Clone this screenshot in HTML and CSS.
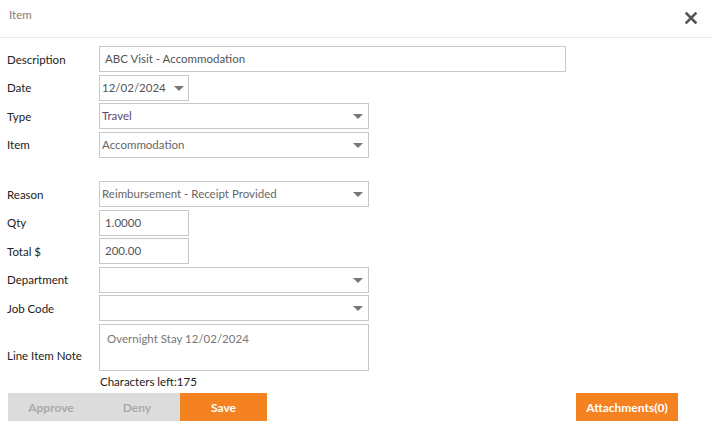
FILE: index.html
```html
<!DOCTYPE html>
<html lang="en">
<head>
    <meta charset="UTF-8">
    <title>Item</title>
    <link rel="stylesheet" href="styles.css">
</head>
<body>

    <!-- Cabecera del diálogo -->
    <div class="dialog-header">
        <span class="dialog-title">Item</span>
        <span class="close">
            <svg width="12" height="12" viewBox="0 0 12 12">
                <path d="M1.5 1.5 L10.5 10.5 M10.5 1.5 L1.5 10.5" stroke="#555" stroke-width="2.6" stroke-linecap="square"/>
            </svg>
        </span>
    </div>

    <!-- Formulario -->
    <div class="form">
        <div class="row">
            <label>Description</label>
            <div class="field wide">ABC Visit - Accommodation</div>
        </div>
        <div class="row">
            <label>Date</label>
            <div class="field small select date">12/02/2024</div>
        </div>
        <div class="row">
            <label>Type</label>
            <div class="field medium select type">Travel</div>
        </div>
        <div class="row">
            <label>Item</label>
            <div class="field medium select plain">Accommodation</div>
        </div>

        <div class="spacer"></div>

        <div class="row">
            <label>Reason</label>
            <div class="field medium select plain">Reimbursement - Receipt Provided</div>
        </div>
        <div class="row">
            <label>Qty</label>
            <div class="field small">1.0000</div>
        </div>
        <div class="row">
            <label>Total $</label>
            <div class="field small">200.00</div>
        </div>
        <div class="row">
            <label>Department</label>
            <div class="field medium select"></div>
        </div>
        <div class="row">
            <label>Job Code</label>
            <div class="field medium select"></div>
        </div>
        <div class="row note-row">
            <label>Line Item Note</label>
            <div class="field medium note">Overnight Stay 12/02/2024</div>
        </div>
        <div class="chars-left">Characters left:175</div>
    </div>

    <!-- Botones -->
    <div class="actions">
        <div class="left">
            <button class="btn disabled">Approve</button>
            <button class="btn disabled">Deny</button>
            <button class="btn orange">Save</button>
        </div>
        <button class="btn orange attach">Attachments(0)</button>
    </div>

</body>
</html>
```

FILE: styles.css
```css
body {
    font-family: "Lato", "Open Sans", sans-serif;
    font-size: 11.5px;
    color: #222;
    margin: 0;
    padding: 0;
    background-color: #fff;
}

.dialog-header {
    height: 38px;
    margin-right: 3px;
    border-bottom: 1px solid #e8e8e8;
    display: flex;
    justify-content: space-between;
    align-items: flex-start;
    box-sizing: border-box;
}

.dialog-title {
    color: #8c7a66;
    font-size: 11.5px;
    padding: 8px 0 0 9px;
}

.close {
    padding: 12px 16px 0 0;
}

.form {
    padding: 8px 0 0 7px;
}

.row {
    display: flex;
    align-items: center;
    margin-bottom: 2.5px;
}

.row label {
    width: 92px;
    flex-shrink: 0;
}

.field {
    height: 26px;
    box-sizing: border-box;
    border: 1px solid #c8c8c8;
    padding: 0 5px;
    line-height: 24px;
    color: #555;
    position: relative;
}

.field.wide {
    width: 467px;
}

.field.medium {
    width: 270px;
}

.field.small {
    width: 90px;
}

.field.select {
    padding-left: 2px;
}

.field.select::after {
    content: "";
    position: absolute;
    right: 5px;
    top: 10px;
    border-left: 5px solid transparent;
    border-right: 5px solid transparent;
    border-top: 5px solid #777;
}

.field.date::after {
    right: 4px;
}

.field.type {
    color: #5e4a6e;
}

.field.plain {
    color: #666;
}

.spacer {
    height: 21px;
}

.note-row label {
    padding-top: 16px;
}

.field.note {
    height: 47px;
    line-height: 16px;
    padding: 6px 7px;
    color: #777;
}

.chars-left {
    padding: 2px 0 0 93px;
}

.actions {
    display: flex;
    justify-content: space-between;
    padding: 5px 38px 0 8px;
}

.actions .left {
    display: flex;
}

.btn {
    font-family: inherit;
    font-size: 12px;
    font-weight: bold;
    height: 28px;
    border: none;
    cursor: pointer;
    padding: 0;
}

.btn.disabled {
    width: 86px;
    background-color: #dcdcdc;
    color: #aaa;
}

.btn.orange {
    width: 87px;
    background-color: #f58220;
    color: #fff;
}

.btn.attach {
    width: 102px;
}
```
